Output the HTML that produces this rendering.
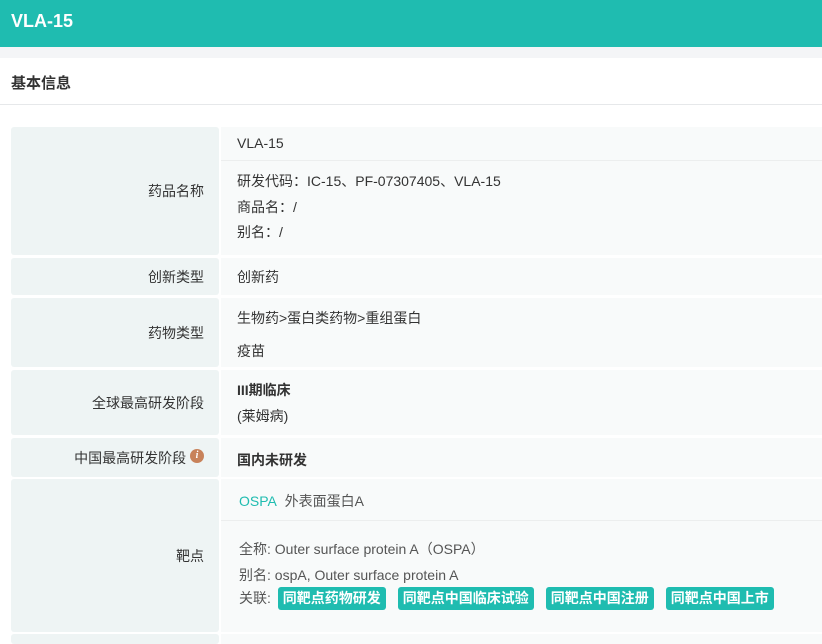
<html><head><style>
body{margin:0;width:822px;height:636px;overflow:hidden;background:#fff;font-family:"Liberation Sans","Noto Sans CJK SC",sans-serif;color:#333;font-size:14px;position:relative}
.a{position:absolute}
.l{position:absolute;left:11px;width:208px;background:#eef4f4;border-radius:3px;text-align:right;box-sizing:border-box;padding-right:15px;display:flex;align-items:center;justify-content:flex-end}
.v{position:absolute;left:221px;right:0;background:#f8fafa}
.t{position:absolute;left:237px;white-space:nowrap}
.tag{display:inline-block;background:#1fbcb0;color:#fff;border-radius:3px;padding:0 5px;height:23px;line-height:23px;margin-right:12px;font-size:14px;font-weight:bold}
</style></head><body>
<div class="a" style="left:0;top:0;width:822px;height:47px;background:#1fbcb0"></div>
<div class="a" style="left:11px;top:11px;color:#fff;font-weight:bold;font-size:18px">VLA-15</div>
<div class="a" style="left:0;top:47px;width:822px;height:11px;background:#f4f5f7"></div>
<div class="a" style="left:0;top:104px;width:822px;height:1px;background:#e6e8ea"></div>
<div class="a" style="left:11px;top:72px;font-weight:bold;font-size:15px">基本信息</div>

<div class="l" style="top:127px;height:128px">药品名称</div>
<div class="v" style="top:127px;height:128px"></div>
<div class="a" style="left:221px;right:0;top:160px;height:1px;background:#eceeee"></div>
<div class="t" style="top:135px">VLA-15</div>
<div class="t" style="top:171px">研发代码：IC-15、PF-07307405、VLA-15</div>
<div class="t" style="top:197px">商品名：/</div>
<div class="t" style="top:222px">别名：/</div>

<div class="l" style="top:258px;height:37px">创新类型</div>
<div class="v" style="top:258px;height:37px"></div>
<div class="t" style="top:267px">创新药</div>

<div class="l" style="top:298px;height:69px">药物类型</div>
<div class="v" style="top:298px;height:69px"></div>
<div class="t" style="top:308px">生物药&gt;蛋白类药物&gt;重组蛋白</div>
<div class="t" style="top:341px">疫苗</div>

<div class="l" style="top:370px;height:65px">全球最高研发阶段</div>
<div class="v" style="top:370px;height:65px"></div>
<div class="t" style="top:380px;font-weight:bold">III期临床</div>
<div class="t" style="top:406px">(莱姆病)</div>

<div class="l" style="top:438px;height:39px">中国最高研发阶段&nbsp;<span style="display:inline-block;width:14px;height:14px;border-radius:7px;background:#c8825a;color:#fff;font-size:10px;line-height:14px;text-align:center;font-style:italic;font-family:'Liberation Serif',serif;font-weight:bold;margin-top:-4px">i</span></div>
<div class="v" style="top:438px;height:39px"></div>
<div class="t" style="top:450px;font-weight:bold">国内未研发</div>

<div class="l" style="top:479px;height:153px;padding-right:15px">靶点</div>
<div class="v" style="top:479px;height:153px"></div>
<div class="a" style="left:221px;right:0;top:520px;height:1px;background:#eceeee"></div>
<div class="t" style="top:491px;left:239px"><span style="color:#1fbcb0">OSPA</span>&nbsp;&nbsp;<span style="color:#555">外表面蛋白A</span></div>
<div class="t" style="top:539px;left:239px;color:#555">全称:&nbsp;Outer surface protein A（OSPA）</div>
<div class="t" style="top:565px;left:239px;color:#555">别名:&nbsp;ospA, Outer surface protein A</div>
<div class="t" style="top:587px;left:239px;color:#555;line-height:23px">关联:&nbsp;<span class="tag" style="margin-left:3px">同靶点药物研发</span><span class="tag">同靶点中国临床试验</span><span class="tag">同靶点中国注册</span><span class="tag">同靶点中国上市</span></div>

<div class="l" style="top:634px;height:10px"></div>
<div class="v" style="top:634px;height:10px"></div>
</body></html>
